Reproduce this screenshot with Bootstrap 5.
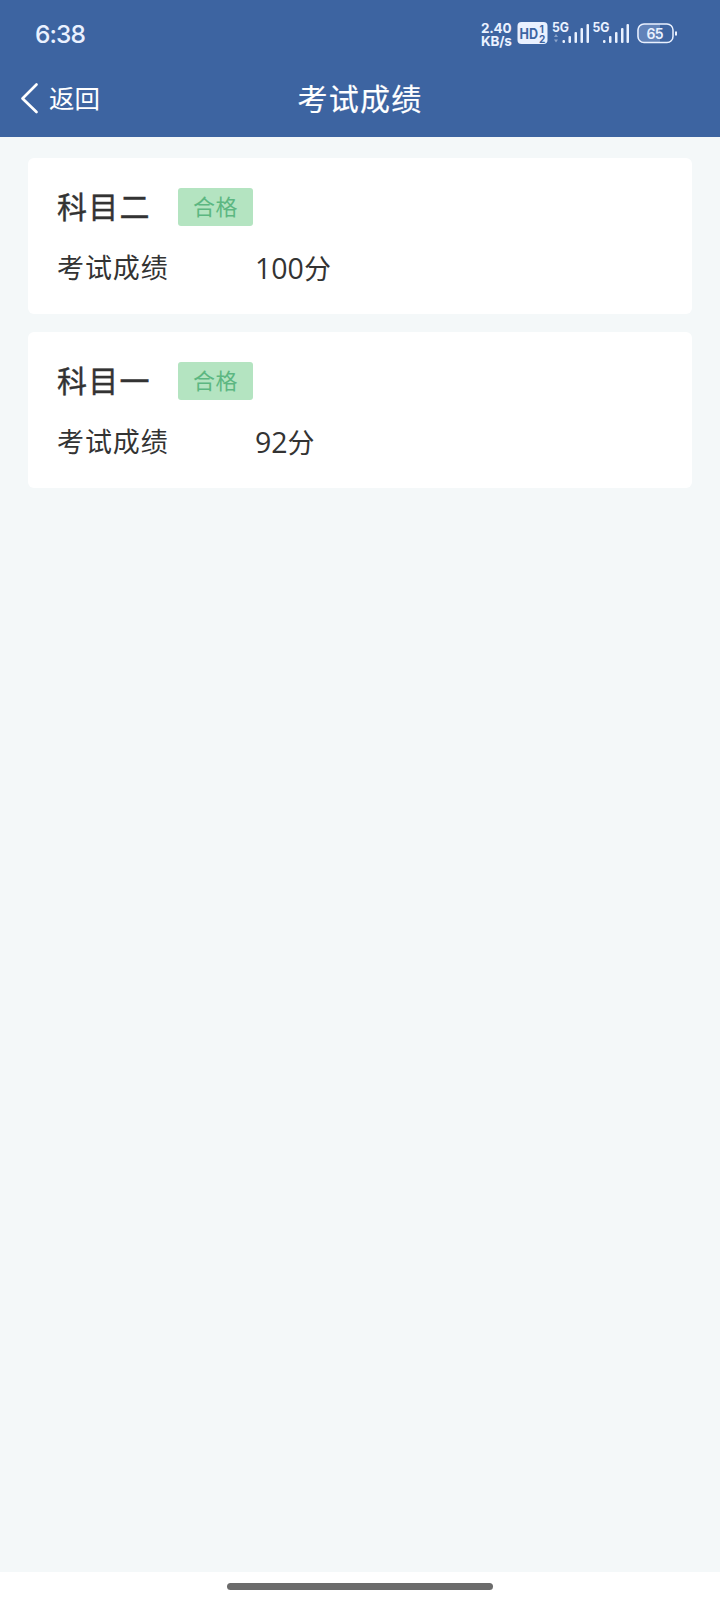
<!DOCTYPE html>
<html lang="zh-CN">
<head>
<meta charset="utf-8">
<meta name="viewport" content="width=device-width, initial-scale=1">
<title>考试成绩</title>
<link href="https://cdn.jsdelivr.net/npm/bootstrap@5.3.0/dist/css/bootstrap.min.css" rel="stylesheet">
<style>
body{background:#f4f8f9;color:#333;font-family:"Open Sans","Noto Sans CJK SC",sans-serif;}
.app-head{background:#3d64a1;height:137px;color:#fff}
.status{height:66px;padding:0 42px 0 35px;color:#eaf1ff}
.clock{font:500 24.5px/30px Inter,sans-serif;letter-spacing:-.9px;padding-top:1px}
.rate{font:700 13.5px/13px Inter,sans-serif;width:32px;letter-spacing:-.2px;white-space:nowrap}
.title-bar{height:62px}
.back{padding-left:20px;color:#fff;font:400 25.5px/36px "Noto Sans CJK SC",sans-serif}
.back svg{position:relative;top:1px}
.page-title{font:400 30px/40px "Noto Sans CJK SC",sans-serif;letter-spacing:1.3px;-webkit-text-stroke:.2px;padding-bottom:1px}
.results{padding:21px 28px 0;gap:18px}
.result{height:156px;border:0;border-radius:6px;padding:29px 28px 0 29px;color:#333}
.subject{font:400 30px/38px "Noto Sans CJK SC",sans-serif;letter-spacing:1.3px;width:121px;margin:-1px 0 0;-webkit-text-stroke:.4px}
.pass{width:75px;height:38px;border-radius:3px;background:#b4e4c1;color:#5cb781;font:400 22px/35px "Noto Sans CJK SC",sans-serif;letter-spacing:.5px;margin-top:1px}
.score{font-size:27px;line-height:40px;margin-top:22px}
.score dt{width:198px;font-weight:400;letter-spacing:.9px}
.score dd{margin:0}
.score .num{font-size:28.5px;letter-spacing:0}
.gesture{height:28px}
.pill{width:266px;height:7px;border-radius:4px;background:#6b6b6b;margin-top:11px}
svg text{font-family:Inter,sans-serif;font-weight:700}
</style>
</head>
<body>
<div class="d-flex flex-column vh-100 overflow-hidden">
<header class="app-head flex-shrink-0">
  <div class="status d-flex align-items-center">
    <div class="clock">6:38</div>
    <div class="d-flex align-items-center ms-auto">
      <div class="rate mt-1">2.40<br>KB/s</div>
      <svg width="200" height="40" viewBox="0 0 200 40" style="margin-right:-35px">
        <rect x="4.500" y="9" width="30" height="22" rx="4" fill="#eaf1ff"/>
        <g fill="#3d64a1"><text x="6.500" y="25.5" font-size="14" textLength="18.500" lengthAdjust="spacingAndGlyphs">HD</text><text x="26.500" y="19.500" font-size="10">1</text><text x="26" y="29.500" font-size="10">2</text></g>
        <g fill="#eaf1ff">
          <text x="39" y="19" font-size="12.500" textLength="17" lengthAdjust="spacingAndGlyphs">5G</text>
          <path d="M41 24l2-3 2 3zM41 26.500l2 3 2-3z" opacity=".45"/>
          <rect x="49.500" y="27" width="2.500" height="3" rx="1"/><rect x="55.500" y="23" width="2.500" height="7" rx="1"/><rect x="61.500" y="19" width="2.500" height="11" rx="1"/><rect x="67.500" y="15" width="2.500" height="15" rx="1"/><rect x="73.500" y="11" width="2.500" height="19" rx="1"/>
          <text x="79.500" y="19" font-size="12.500" textLength="17" lengthAdjust="spacingAndGlyphs">5G</text>
          <rect x="90" y="27" width="2.500" height="3" rx="1"/><rect x="96" y="23" width="2.500" height="7" rx="1"/><rect x="102" y="19" width="2.500" height="11" rx="1"/><rect x="108" y="15" width="2.500" height="15" rx="1"/><rect x="113.500" y="11" width="2.500" height="19" rx="1"/>
        </g>
        <path d="M130 11h17v18h-17a6 6 0 0 1-6-6v-6a6 6 0 0 1 6-6z" fill="#6283b9"/>
        <rect x="125" y="11" width="35" height="18.500" rx="6" fill="none" stroke="#eaf1ff" stroke-width="1.500"/>
        <path d="M163 18.500v4" stroke="#eaf1ff" stroke-width="2"/>
        <text x="133.500" y="25.500" font-size="14" fill="#eaf1ff" textLength="17" style="font-weight:600">65</text>
      </svg>
    </div>
  </div>
  <nav class="title-bar row g-0 align-items-center">
    <a class="back col-4 d-flex align-items-center text-decoration-none" href="#">
      <svg class="me-2" width="21" height="32" viewBox="0 0 21 32" fill="none" stroke="#fff" stroke-width="2.700" stroke-linecap="round" stroke-linejoin="round"><path d="M16.500 2.500L2.500 16.500 16.500 30"/></svg><span>返回</span>
    </a>
    <div class="page-title col-4 text-center">考试成绩</div>
  </nav>
</header>
<main class="results d-flex flex-column flex-grow-1">
  <section class="result card">
    <div class="d-flex"><h2 class="subject">科目二</h2><span class="pass text-center">合格</span></div>
    <dl class="score d-flex mb-0"><dt>考试成绩</dt><dd><span class="num">100</span>分</dd></dl>
  </section>
  <section class="result card">
    <div class="d-flex"><h2 class="subject">科目一</h2><span class="pass text-center">合格</span></div>
    <dl class="score d-flex mb-0"><dt>考试成绩</dt><dd><span class="num">92</span>分</dd></dl>
  </section>
</main>
<footer class="gesture bg-white d-flex justify-content-center flex-shrink-0"><div class="pill"></div></footer>
</div>
<script src="https://cdn.jsdelivr.net/npm/bootstrap@5.3.0/dist/js/bootstrap.bundle.min.js"></script>
</body>
</html>
